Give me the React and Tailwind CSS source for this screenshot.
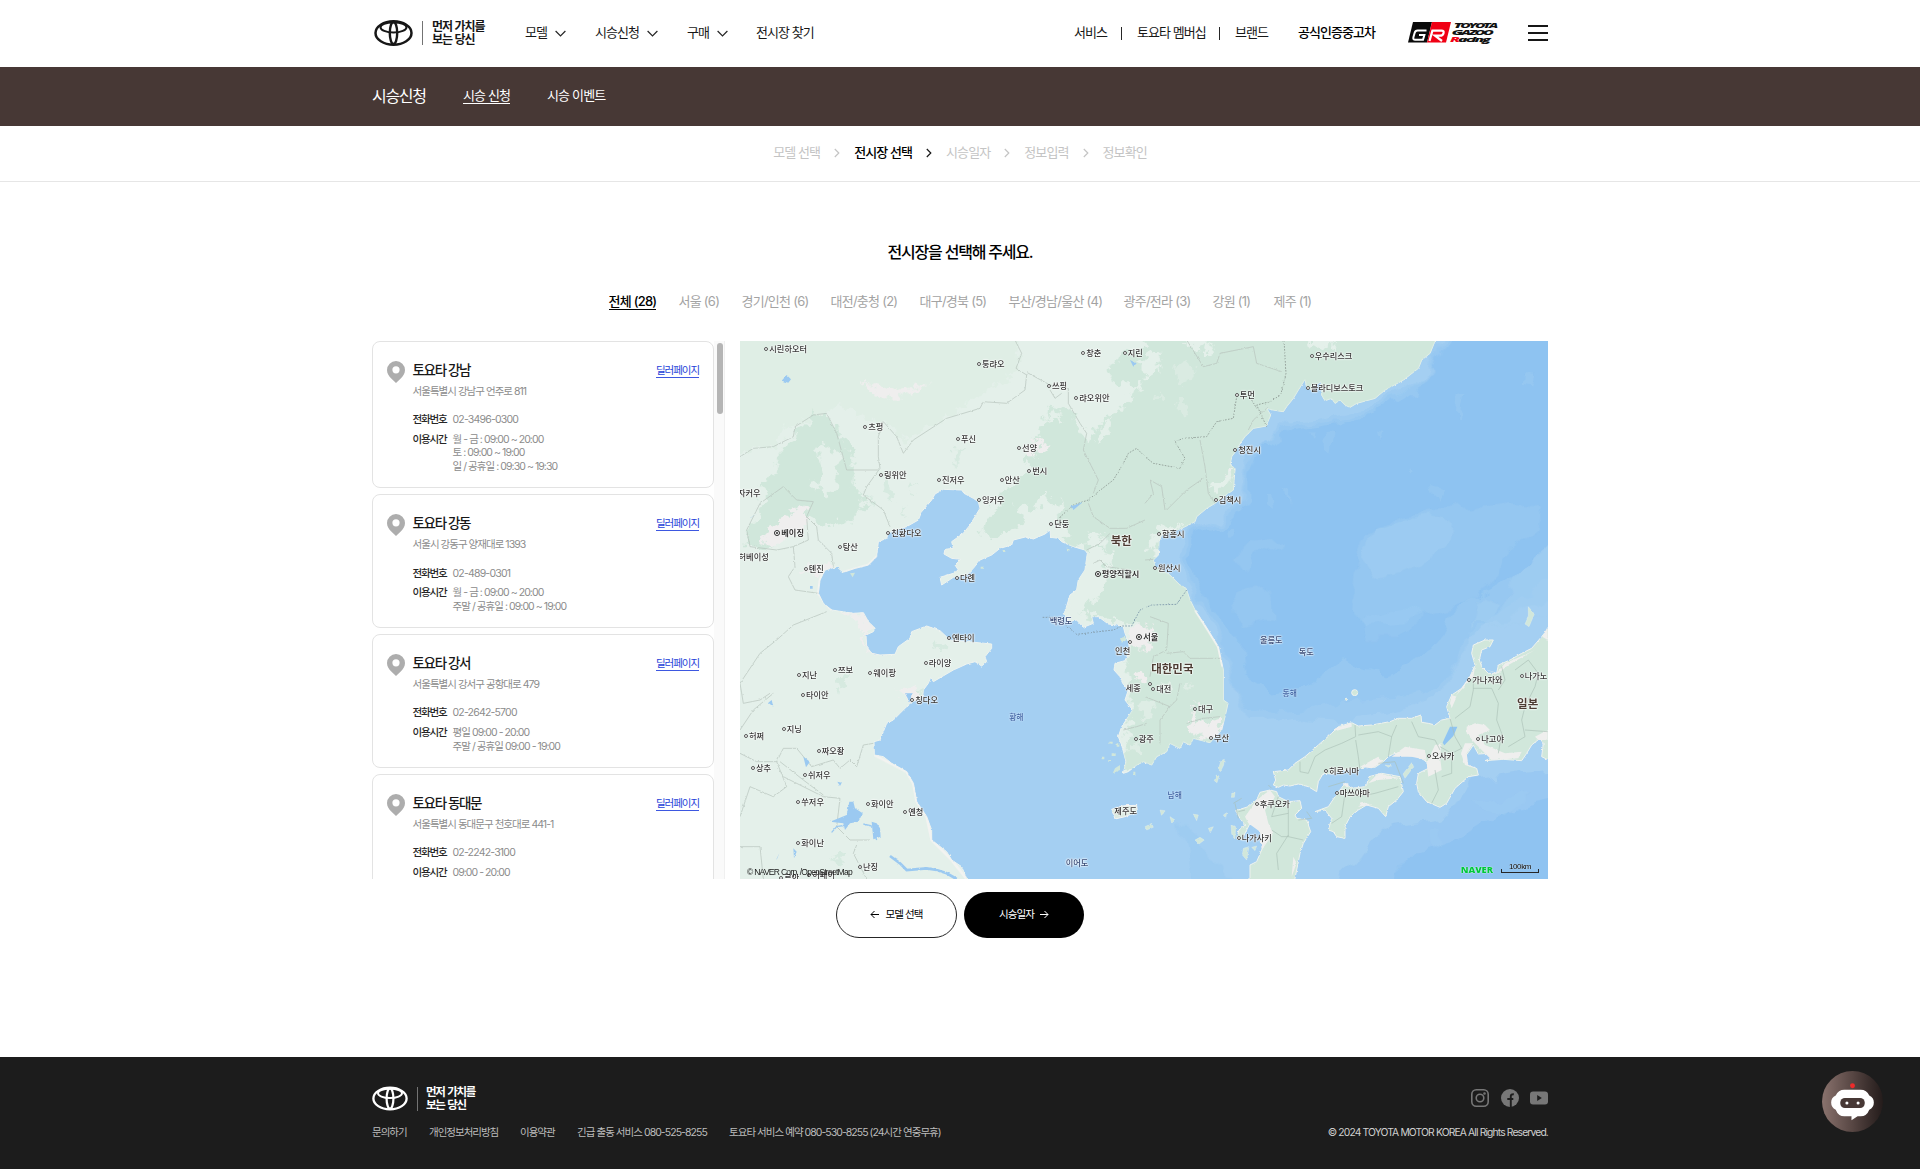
import React from "react";

const Chevron = ({ className, d, w, h }) => (
  <svg className={className} width={w} height={h} viewBox={`0 0 ${w} ${h}`} fill="none" stroke="currentColor" strokeWidth="1.2">
    <path d={d} />
  </svg>
);
const Down = () => <Chevron className="text-neutral-800" w={11} h={7} d="M.6 1 5.5 6 10.400 1" />;
const Next = ({ active }) => (
  <Chevron className={active ? "text-neutral-900" : "text-[#c4c4c4]"} w={6} h={10} d="M.8 1 4.8 5 .8 9" />
);

const Emblem = ({ w, h }) => (
  <svg width={w} height={h} viewBox="0 0 78 52" fill="none" stroke="currentColor">
    <ellipse cx="39" cy="26" rx="36" ry="23.4" strokeWidth="5" />
    <path d="M39 5C54 5 65 9 65 14.500S54 25 39 25 13 20 13 14.500 24 5 39 5z" strokeWidth="4.200" />
    <ellipse cx="39" cy="26" rx="7.400" ry="22" strokeWidth="4.800" />
  </svg>
);

const Brand = ({ w, h, bar, gap1, gap2, text }) => (
  <div className="flex items-center">
    <Emblem w={w} h={h} />
    <span className={`w-px ${gap1} ${gap2} ${bar}`} />
    <span className={`font-bold whitespace-nowrap [word-spacing:1px] ${text}`}>
      먼저 가치를
      <br />
      보는 당신
    </span>
  </div>
);

const Racing = () => (
  <svg width="90" height="24" viewBox="0 0 90 24">
    <path d="M5 1H24L19 21.500H0z" fill="#0a0a0a" />
    <path d="M24 1H43L38 21.500H19z" fill="#f00014" />
    <path d="M18.5 9.600H9.5Q7.3 9.600 6.600 12L5.400 16.200Q4.800 18.800 7.200 18.800H15L16.400 14H11" fill="none" stroke="#fff" strokeWidth="2" />
    <path d="M21.500 20 24.400 9.600H33.500Q36.300 9.600 35.500 12.200 34.900 14.700 32 14.700H27L34 20" fill="none" stroke="#fff" strokeWidth="2.200" />
    <g fontFamily="Open Sans, Liberation Sans, sans-serif" fontWeight="800" fontStyle="italic" fill="#111">
      <text x="45.500" y="6.600" fontSize="7.200" textLength="42.500" lengthAdjust="spacingAndGlyphs">T<tspan fontSize="6.200">OYOTA</tspan></text>
      <text x="43.500" y="13.600" fontSize="7.200" textLength="40" lengthAdjust="spacingAndGlyphs">G<tspan fontSize="6.200">AZOO</tspan></text>
      <text x="42" y="21" fontSize="7.600" textLength="39" lengthAdjust="spacingAndGlyphs">
        <tspan fill="#f00014">R</tspan>acing
      </text>
    </g>
  </svg>
);

const Header = () => (
  <header className="h-[67px] bg-white">
    <div className="mx-auto flex h-[66px] w-[1176px] items-center justify-between text-[13px] tracking-[-0.95px] whitespace-nowrap">
      <div className="flex items-center">
        <div className="ml-0.5 w-[151px]">
          <Brand w={39} h={26} gap1="ml-[9px] h-6" gap2="mr-[9px]" bar="bg-neutral-500" text="text-[12px] leading-[13px] tracking-[-1.100px]" />
        </div>
        <a className="flex w-[70px] items-center gap-2">모델<Down /></a>
        <a className="flex w-[92px] items-center gap-2">시승신청<Down /></a>
        <a className="flex w-[69px] items-center gap-2">구매<Down /></a>
        <a>전시장 찾기</a>
      </div>
      <div className="flex items-center">
        <a className="w-[47px]">서비스</a>
        <span className="mr-[15px] h-[13px] w-px bg-neutral-800" />
        <a className="w-[82px]">토요타 멤버십</a>
        <span className="mr-[15px] h-[13px] w-px bg-neutral-800" />
        <a className="w-[63px]">브랜드</a>
        <a className="w-[110px] font-medium text-black">공식인증중고차</a>
        <Racing />
        <div className="ml-[30px] flex w-5 flex-col gap-[5px]">
          <i className="h-0.5 bg-neutral-900" />
          <i className="h-0.5 bg-neutral-900" />
          <i className="h-0.5 bg-neutral-900" />
        </div>
      </div>
    </div>
  </header>
);

const SubNav = () => (
  <nav className="h-[59px] bg-[#473835] text-white">
    <div className="mx-auto flex h-[57px] w-[1176px] items-center text-[13px] tracking-[-0.9px] whitespace-nowrap">
      <h2 className="w-[91px] text-[16px] tracking-[-1.3px]">시승신청</h2>
      <a className="w-[47px] border-b border-white leading-[16px]">시승 신청</a>
      <a className="ml-[37px] tracking-[-0.850px]">시승 이벤트</a>
    </div>
  </nav>
);

const steps = ["모델 선택", "전시장 선택", "시승일자", "정보입력", "정보확인"];
const Steps = () => (
  <ol className="flex h-14 items-center justify-center border-b border-[#e6e6e6] pb-px text-[13px] tracking-[-0.9px] whitespace-nowrap">
    {steps.map((s, i) => (
      <li key={s} className="flex items-center">
        <span className={i === 1 ? "font-medium text-black" : "text-[#c4c4c4]"}>{s}</span>
        {i < 4 && (
          <span className="mr-[14px] ml-[14px]">
            <Next active={i === 1} />
          </span>
        )}
      </li>
    ))}
  </ol>
);

const regions = [
  ["전체 (28)", "w-[70px]"],
  ["서울 (6)", "w-[63px]"],
  ["경기/인천 (6)", "w-[89px]"],
  ["대전/충청 (2)", "w-[89px]"],
  ["대구/경북 (5)", "w-[89px]"],
  ["부산/경남/울산 (4)", "w-[115px]"],
  ["광주/전라 (3)", "w-[89px]"],
  ["강원 (1)", "w-[61px]"],
  ["제주 (1)", "w-[38px]"],
];

const Tabs = () => (
  <ul className="mt-[28px] flex h-5 justify-center text-[13px] tracking-[-0.75px] whitespace-nowrap text-[#a3a3a3]">
    {regions.map(([name, w], i) => (
      <li key={name} className={w}>
        <span className={i === 0 ? "inline-block border-b border-black leading-[16px] font-medium text-black" : "inline-block leading-[16px]"}>{name}</span>
      </li>
    ))}
  </ul>
);

const dealers = [
  { name: "토요타 강남", addr: "서울특별시 강남구 언주로 811", tel: "02-3496-0300", hours: ["월 - 금 : 09:00 ~ 20:00", "토 : 09:00 ~ 19:00", "일 / 공휴일 : 09:30 ~ 19:30"] },
  { name: "토요타 강동", addr: "서울시 강동구 양재대로 1393", tel: "02-489-0301", hours: ["월 - 금 : 09:00 ~ 20:00", "주말 / 공휴일 : 09:00 ~ 19:00"] },
  { name: "토요타 강서", addr: "서울특별시 강서구 공항대로 479", tel: "02-2642-5700", hours: ["평일 09:00 - 20:00", "주말 / 공휴일 09:00 - 19:00"] },
  { name: "토요타 동대문", addr: "서울특별시 동대문구 천호대로 441-1", tel: "02-2242-3100", hours: ["09:00 - 20:00", "주말 / 공휴일 09:00 - 19:00"] },
];

const DealerCard = ({ d }) => (
  <li className="flex shrink-0 rounded-lg border border-[#e3e3e3] bg-white px-[14px] pt-[18.500px] pb-[14px]">
    <svg className="mr-[7.500px] shrink-0" width="18" height="22" viewBox="0 0 18 22">
      <path fill="#adadad" fillRule="evenodd" d="M9 0a9 9 0 0 0-9 9c0 3.500 1.800 6 4 8.200L9 22l5-4.800c2.200-2.200 4-4.700 4-8.200a9 9 0 0 0-9-9zm0 5.200a3.600 3.600 0 1 1 0 7.200 3.600 3.600 0 0 1 0-7.200z" />
    </svg>
    <div className="grow text-[10.5px] leading-[13.6px] tracking-[-0.97px] whitespace-nowrap text-[#8c8c8c]">
      <div className="flex h-5 items-center justify-between">
        <h3 className="text-[13.500px] font-medium tracking-[-1.350px] text-neutral-900">{d.name}</h3>
        <a className="mt-px border-b border-[#3d57e0] leading-[12px] tracking-[-1.050px] text-[#2340d8]">딜러페이지</a>
      </div>
      <p className="mt-[4.500px]">{d.addr}</p>
      <dl className="mt-[14.500px] grid grid-cols-[40px_1fr] gap-y-[6px]">
        <dt className="font-medium text-neutral-800 tracking-[-1.200px]">전화번호</dt>
        <dd className="tracking-[-0.8px]">{d.tel}</dd>
        <dt className="font-medium text-neutral-800 tracking-[-1.200px]">이용시간</dt>
        <dd className="tracking-[-0.94px]">
          {d.hours.map((h) => (
            <p key={h}>{h}</p>
          ))}
        </dd>
      </dl>
    </div>
  </li>
);

const DealerList = () => (
  <div className="flex h-[538px] w-[353px] overflow-hidden">
    <ul className="flex w-[342px] flex-col gap-[6px]">
      {dealers.map((d) => (
        <DealerCard key={d.name} d={d} />
      ))}
    </ul>
    <div className="w-[11px] border-r border-[#f0f0f0] bg-[#fafafa] pt-0.5 pl-[2.500px]">
      <div className="h-[71px] w-[6px] rounded-full bg-[#b5b5b5]" />
    </div>
  </div>
);

/* Map labels: [text, marker x, marker y] in map units, three units per pixel. */
const cities = [
  ["시린하오터", 79, 27], ["퉁랴오", 717, 73], ["창춘", 1030, 38], ["지린", 1154, 40], ["쓰핑", 927, 137], ["랴오위안", 1009, 174],
  ["츠펑", 376, 261], ["푸신", 654, 298], ["선양", 837, 325], ["번시", 868, 392], ["링위안", 423, 404], ["진저우", 597, 420],
  ["안산", 785, 420], ["잉커우", 717, 480], ["단둥", 934, 552], ["친황다오", 445, 580], ["탕산", 299, 621], ["톈진", 197, 686],
  ["다롄", 651, 714], ["우수리스크", 1715, 47], ["블라디보스토크", 1703, 143], ["투먼", 1490, 165], ["청진시", 1486, 329],
  ["김책시", 1427, 481], ["함흥시", 1257, 582], ["원산시", 1245, 683], ["옌타이", 627, 895], ["라이양", 557, 968], ["쯔보", 285, 990],
  ["웨이팡", 391, 999], ["지난", 177, 1005], ["타이안", 189, 1066], ["칭다오", 517, 1080], ["지닝", 131, 1166], ["허쩌", 18, 1188],
  ["짜오좡", 236, 1232], ["상추", 39, 1285], ["쉬저우", 195, 1306], ["쑤저우", 175, 1386], ["화이안", 384, 1392], ["옌청", 496, 1416],
  ["화이난", 175, 1509], ["난징", 360, 1580], ["루안", 124, 1614], ["허페이", 208, 1604], ["광주", 1187, 1196], ["대전", 1240, 1047],
  ["대구", 1365, 1108], ["부산", 1413, 1194], ["가나자와", 2188, 1020], ["나가노", 2345, 1008], ["나고야", 2215, 1198],
  ["오사카", 2066, 1248], ["히로시마", 1758, 1293], ["마쓰야마", 1790, 1360], ["후쿠오카", 1550, 1391], ["나가사키", 1496, 1494],
];
const capitals = [["베이징", 112, 580], ["평양직할시", 1073, 701], ["서울", 1198, 891]];
const countries = [["북한", 1144, 602], ["대한민국", 1297, 987], ["일본", 2363, 1092]];
const places = [["자커우", 28, 460], ["허베이성", 41, 650], ["인천", 1148, 933], ["세종", 1180, 1045], ["제주도", 1157, 1413]];
const seas = [["백령도", 963, 842], ["이어도", 1011, 1568], ["울릉도", 1594, 901], ["독도", 1699, 935]];
const waters = [["황해", 829, 1130], ["동해", 1649, 1059], ["남해", 1304, 1365]];

const at = (x, y) => ({ left: x / 3, top: (y - 3) / 3 });
const halo = "[text-shadow:0_0_1px_#fff,0_0_1px_#fff,0_0_2px_#fff,0_0_2px_#fff]";
const softHalo = "[text-shadow:0_0_1px_#dcebfb,0_0_2px_#dcebfb]";

const Place = ({ p, cls, glow = halo }) => (
  <span className={`absolute -translate-x-1/2 -translate-y-1/2 ${glow} ${cls}`} style={at(p[1], p[2])}>{p[0]}</span>
);

const MapLabels = () => (
  <div className="text-[8.200px] leading-[10px] font-medium tracking-normal whitespace-nowrap text-[#333]">
    {cities.map((c) => (
      <span key={c[0]} className={`absolute -ml-[2px] flex -translate-y-1/2 items-center gap-px ${halo}`} style={at(c[1], c[2])}>
        <i className="size-[4px] rounded-full border border-neutral-600 bg-white" />
        {c[0]}
      </span>
    ))}
    {capitals.map((c) => (
      <span key={c[0]} className={`absolute -ml-[3px] flex -translate-y-1/2 items-center gap-px font-bold ${halo}`} style={at(c[1], c[2])}>
        <i className="flex size-[6px] items-center justify-center rounded-full border border-neutral-800 bg-white">
          <b className="size-[2px] rounded-full bg-neutral-800" />
        </i>
        {c[0]}
      </span>
    ))}
    {countries.map((p) => <Place key={p[0]} p={p} cls="text-[11.5px] font-bold text-[#4c3c33]" />)}
    {places.map((p) => <Place key={p[0]} p={p} cls="" />)}
    {seas.map((p) => <Place key={p[0]} p={p} cls="text-[#354a78]" />)}
    {waters.map((p) => <Place key={p[0]} p={p} glow={softHalo} cls="text-[7.800px] text-[#3f62a3]" />)}
  </div>
);

const MAINLAND =
  "M-20-20H2085L2085 3 2070 40 2045 60 2035 85 1990 120 1935 150 1905 175 1850 190 1830 202 1815 195 1800 180 1785 190 1775 175 1755 182 1745 165 1744 125 1725 135 1715 150 1700 140 1695 118 1675 150 1660 175 1640 200 1630 215 1600 210 1580 205 1592 225 1578 258 1540 265 1515 290 1500 310 1490 330 1475 350 1470 375 1485 385 1480 450 1450 470 1425 490 1400 505 1370 530 1365 545 1325 565 1265 585 1257 605 1255 645 1240 660 1245 680 1290 705 1320 735 1338 745 1350 780 1365 810 1395 855 1435 920 1450 990 1450 1080 1464 1090 1455 1130 1445 1170 1425 1190 1410 1208 1380 1200 1360 1195 1350 1215 1330 1205 1320 1225 1290 1210 1280 1235 1250 1250 1235 1275 1210 1265 1190 1275 1165 1295 1150 1300 1158 1265 1145 1215 1135 1190 1145 1160 1165 1130 1178 1110 1155 1080 1165 1050 1148 1030 1140 1010 1122 990 1125 970 1155 962 1170 930 1165 905 1155 880 1150 860 1130 855 1105 852 1075 830 1055 830 1060 850 1030 862 1010 840 985 845 970 820 978 805 990 765 1010 750 1015 720 1035 690 1042 640 1035 630 1000 620 965 605 955 595 932 592 930 570 915 582 880 597 860 590 820 600 815 615 780 625 755 645 720 660 700 685 680 705 640 712 605 735 600 712 640 700 655 690 645 675 662 658 635 655 612 642 615 628 640 625 635 605 670 580 690 555 705 530 720 505 715 485 700 475 672 460 665 450 610 448 585 462 575 480 545 515 535 540 500 560 465 570 445 580 440 595 415 605 410 650 385 675 345 685 310 697 290 680 255 690 240 720 235 760 250 790 275 810 340 820 370 818 385 845 405 865 400 875 378 885 380 920 395 940 420 945 465 943 475 920 510 895 515 875 560 858 600 872 630 900 755 912 755 925 735 950 740 965 725 978 705 965 680 972 640 990 580 1025 572 1012 565 1030 550 1050 548 1070 510 1090 500 1100 480 1120 460 1140 440 1150 420 1200 402 1205 403 1245 430 1250 455 1270 500 1295 520 1330 530 1385 560 1430 575 1470 575 1500 620 1535 635 1560 665 1580 690 1640-20 1640z";

const HONSHU =
  "M385 485 392 510 385 525 400 532 415 525 435 528 460 522 490 530 515 545 520 515 535 490 560 492 590 480 640 475 665 470 690 472 715 455 730 440 750 430 790 437 820 440 845 455 850 475 820 490 815 520 820 545 845 575 885 592 905 580 930 535 970 500 1000 495 995 475 965 465 960 440 975 420 985 405 1000 432 1035 430 1045 442 1020 452 1075 448 1130 452 1145 430 1160 405 1185 385 1195 400 1190 440 1230 460V30L1190 80 1160 115 1130 130 1095 150 1060 165 1055 190 1030 190 1010 170 1003 150 1010 120 1035 110 1045 90 1020 90 985 105 980 130 990 165 975 200 950 235 920 255 905 290 915 325 890 330 870 345 850 340 830 337 828 315 800 325 760 325 735 335 680 345 640 348 620 338 580 350 560 370 520 405 480 440 450 460 430 480z";
const KYUSHU =
  "M395 545 400 560 430 575 465 572 470 595 450 615 455 625 485 630 497 665 475 700 465 730 455 780 445 830H315V765L335 755 350 720 362 690 345 665 335 640 315 640 305 660 290 690 275 685 282 660 300 645 285 625 272 602 310 590 335 570 345 547 375 540z";
const SHIKOKU =
  "M665 525 672 500 710 490 765 500 775 545 755 570 730 590 722 620 700 595 665 585 640 600 615 620 600 650 600 685 575 680 565 665 550 660 560 625 540 600 510 605 550 590 570 560 600 520 620 535 660 530z";
const ISLANDS =
  "M228 452 238 448 236 465 226 485 220 478zM214 495 222 498 216 518 208 512zM800 458 806 470 780 505 774 492zM1150-10 1168 12 1152 50 1140 42 1150 20zM260 550 270 548 268 562 260 562zM150 690 165 682 178 690 162 702zM190 655 205 650 196 668zM235 615 245 608 242 625zM258 645 272 650 270 685 260 672zM295 715 312 710 305 750 292 735zM320 712 335 708 330 722zM720 465 738 467 730 472zM0 650 20 640 25 652 5 660zM75 620 90 630 80 640zM145 612 160 615 155 632zM45 600 60 602 50 618z";

const TheMap = () => (
  <div className="relative h-[538px] w-[808px] overflow-hidden bg-[#a4cff2]">
    <svg className="block" width="808" height="538" viewBox="0 3 2424 1614">
      <defs>
        <filter id="coast" x="-5%" y="-5%" width="110%" height="110%">
          <feTurbulence type="fractalNoise" baseFrequency="0.1" numOctaves="3" seed="4" result="n" />
          <feDisplacementMap in="SourceGraphic" in2="n" scale="7" xChannelSelector="R" yChannelSelector="G" />
        </filter>
        <filter id="rough" x="-10%" y="-10%" width="120%" height="120%">
          <feTurbulence type="fractalNoise" baseFrequency="0.035" numOctaves="4" seed="9" result="n" />
          <feDisplacementMap in="SourceGraphic" in2="n" scale="60" xChannelSelector="R" yChannelSelector="G" />
        </filter>
        <filter id="depth" x="-10%" y="-10%" width="120%" height="120%">
          <feTurbulence type="fractalNoise" baseFrequency="0.012" numOctaves="3" seed="3" result="n" />
          <feDisplacementMap in="SourceGraphic" in2="n" scale="70" xChannelSelector="R" yChannelSelector="G" />
          <feGaussianBlur stdDeviation="1.500" />
        </filter>
        <clipPath id="land"><path d={MAINLAND} /></clipPath>
      </defs>

      <g filter="url(#depth)" fill="#8dc2f1">
        <path opacity=".28" d="M2110-30 2060 90 1990 150 1900 200 1750 235 1640 245 1590 290 1520 340 1500 480 1440 530 1330 590 1300 640 1350 740 1380 790 1440 900 1475 1000 1500 1110 1540 1150 1700 1130 1800 1140 1980 1110 2060 1080 2120 1040 2180 930 2190 860 2300 840 2460 740V-30z" />
        <path opacity=".35" d="M2125-30 2075 80 2005 150 1915 210 1775 245 1650 258 1575 300 1520 370 1510 480 1450 535 1350 590 1320 650 1365 740 1400 800 1460 910 1485 1030 1520 1120 1680 1110 1800 1085 1960 1070 2080 1050 2140 1000 2170 900 2260 830 2460 700V-30z" />
        <path opacity=".9" d="M2140-30 2095 60 2020 160 1930 215 1800 250 1660 270 1560 320 1525 400 1525 480 1470 540 1370 590 1340 650 1385 740 1420 800 1500 900 1510 1010 1590 1060 1700 1040 1800 960 1930 1000 2050 950 2110 880 2140 810 2230 760 2340 700 2460 600V-30z" />
        <path opacity=".5" d="M1800 1617 1880 1500 1960 1460 2100 1440 2200 1330 2300 1310 2460 1290V1660H1780z" />
        <path opacity=".8" d="M1960 1617 2020 1540 2150 1500 2260 1430 2460 1380V1660H1940z" />
        <path opacity=".25" d="M1330 1460 1420 1560 1500 1660H1360z" />
      </g>
      <g filter="url(#depth)" fill="#a4cff2">
        <path opacity=".35" d="M1850 670 1870 590 1920 545 1990 520 2080 510 2180 500 2300 490 2400 500 2390 570 2300 640 2270 720 2180 790 2080 820 1960 850 1870 860 1840 800z" />
        <path opacity=".5" d="M1900 560 1990 530 2080 520 2130 560 2120 610 2030 680 1960 710 1900 720 1870 670z" />
        <path opacity=".35" d="M1480 660 1530 615 1620 595 1610 625 1550 660 1510 700zM1480 760 1560 740 1600 760 1600 840 1500 860z" />
        <path opacity=".5" d="M2340 700 2440 620V820L2250 860 2290 800zM2200 790 2240 760 2290 780 2260 850 2190 850z" />
        <path opacity=".3" d="M1580 450 1600 450 1605 500 1580 490zM1700 280 1718 280 1712 310zM1750 280 1790 285 1780 350 1755 330zM1920 265 1940 270 1930 310zM2150 165 2170 160 2160 240 2145 230zM2350 90 2380 95 2370 130 2345 125zM2070 440 2100 450 2090 480zM1455 560 1485 560 1480 590 1460 590zM1640 430 1655 440 1650 500zM2010 370 2025 380 2015 395z" />
        <path opacity=".25" d="M1860 830 2000 800 2060 830 1980 900 1880 900z" />
        <path opacity=".25" d="M2060 1480 2100 1470 2110 1520 2070 1530zM2200 1400 2380 1350 2300 1430z" />
      </g>

      <g filter="url(#coast)">
        <path d={MAINLAND} fill="#e4f0ea" stroke="#eef3ef" strokeWidth="3" />
        <g transform="translate(1215 810)" fill="#d1e7db" stroke="#eef2ee" strokeWidth="3">
          <path d={HONSHU} />
          <path d={KYUSHU} />
          <path d={SHIKOKU} />
          <path d={ISLANDS} strokeWidth="1" />
          <circle cx="629" cy="248" r="9" />
          <circle cx="604" cy="268" r="3" />
        </g>
        <path d="M1115 1408 1150 1397 1190 1396 1192 1415 1155 1430 1125 1437z" fill="#dcebe2" stroke="#f3f3f3" strokeWidth="3" />
        <path fill="#d1e7db" d="M1085 1250h8v8h-8zM1108 1205h10v6h-10zM1130 1210h8v10h-8zM1115 1240h12v8h-12zM1125 1285 1140 1275 1140 1290 1118 1300zM1105 1260h8v6h-8zM1180 1295h6v10h-6zM1140 895 1155 890 1160 900 1145 908zM330 700 345 698 338 712zM722 680h10v6h-10zM788 630h8v6h-8zM980 622 990 630 982 636z" />
      </g>

      <g clipPath="url(#land)">
        <g filter="url(#rough)">
          <path fill="#ddeee4" d="M-40-40H820L840 90 700 180 620 230 500 300 440 250 300 200 160 250 100 320-40 350z" opacity=".8" />
          <g fill="#d0e7db">
            <path d="M120 340 165 290 220 225 250 215 290 260 310 300 340 330 345 400 340 440 380 500 340 540 240 560 200 520 120 600 60 630 20 620 20 570 60 540 60 490 90 470 60 440 110 400z" />
            <path d="M905 260 930 200 1000 215 1040 300 1090 240 1180 170 1215 130 1200-60H2180V260H1720L1640 330 1540 400 1530 480 1420 570 1320 640 1320 680 1420 760 1510 900 1540 1200 1420 1250 1320 1270 1220 1300 1150 1290 1175 1120 1160 960 1190 850 1080 830 1010 820 1060 700 1060 640 960 590 930 520 850 500 780 510 790 450 860 400 860 350z" />
            <path d="M730 560 760 510 830 500 850 540 800 590 720 580zM1100 90 1160 30 1220 20 1220 130 1120 130z" />
            <path d="M430 440 450 430 470 470 450 480zM500 430 530 440 510 460zM640 340 665 320 655 380zM380 470 400 480 390 500zM480 500 500 500 490 520z" opacity=".7" />
            <path d="M275 1050 300 1010 330 1000 310 1040zM580 900 620 920 600 940zM510 1055 560 1050 540 1065zM270 1560 320 1530 310 1570z" opacity=".7" />
          </g>
          <g fill="#e4f0ea">
            <path d="M230 330 270 310 300 350 290 440 250 470 220 440 245 400zM1240 30 1265 60 1250 100 1215 120 1200 60z" />
            <path d="M1300 70 1340 60 1370 90 1340 130 1310 120zM1310 180 1350 190 1340 230 1310 220zM1240 160 1270 170 1250 190z" opacity=".5" />
            <path d="M1030 620 1110 630 1130 680 1080 690 1100 740 1030 820 980 830 1000 750zM1230 580 1280 560 1330 550 1260 600 1255 645 1230 640zM1420 440 1470 390 1482 400 1470 430 1430 470zM1690 0 1730 30 1780 20 1760 0zM1340 0 1400 0 1420 30 1370 40z" />
            <path d="M890 470 920 460 945 500 970 480 960 540 990 580 950 590 900 540zM1045 580 1090 590 1100 620 1050 620zM1080 270 1120 230 1100 290 1070 310zM920 230 950 210 970 240z" />
            <path d="M1200 1090 1230 1080 1240 1120 1210 1150zM1270 1020 1290 1030 1280 1050zM1330 1040 1350 1030 1345 1060zM1170 1230 1200 1210 1200 1250z" opacity=".7" />
          </g>
          <g fill="#efeeee">
            <path d="M370 130 430 140 470 150 570 130 520 160 420 180 400 155z" />
            <path d="M60 600 100 560 180 500 210 530 200 560 140 590 120 620zM190 680 260 670 285 690 245 720zM870 310 920 310 900 340 860 340z" />
            <path d="M290 812 380 815 410 865 380 880 375 920 440 945 400 945 365 915 370 870 340 835z" />
            <path d="M480 1050 530 1040 540 1080 500 1090z" />
            <path d="M1160 880 1195 850 1235 865 1245 910 1220 930 1190 925 1165 915zM1345 1130 1350 1110 1365 1120 1360 1150 1400 1150 1440 1130 1450 1150 1440 1190 1370 1195 1350 1170zM1360 1090 1390 1085 1380 1100z" />
            <path d="M1180 1000 1200 985 1215 1010 1190 1030zM1460 400 1482 385 1480 410z" />
          </g>
        </g>
        <path d="M1366 810 1395 855 1435 920 1448 980M403 1245 500 1295 520 1330 530 1385 560 1430 575 1500 635 1560 680 1617M255 690 240 720 235 760 275 810M310 697 385 675 410 650" fill="none" stroke="#f3f3f1" strokeWidth="8" />
      </g>

      <g transform="translate(1215 810)">
        <g fill="#efefee" filter="url(#coast)">
          <path d="M965 350 990 340 1020 345 1035 360 1000 375 1020 405 1080 430 1130 425 1120 445 1040 450 990 400 965 370zM960 400 985 400 965 430 970 465 990 475 960 465 948 430zM870 405 890 400 885 440 890 480 850 500 845 460z" />
          <path d="M740 440 780 410 840 420 845 450 800 440zM645 470 700 440 715 455 680 475zM570 355 620 340 620 350 575 362zM335 570 375 540 390 560 360 600 370 640 385 670 350 720 345 665 310 640 300 620zM670 520 700 490 765 505 700 510zM1010 175 1055 190 1080 160 1150 130 1170 120 1090 165 1060 190zM975 200 990 170 985 200 930 260zM920 255 935 260 920 295 915 280zM1192 80 1208 50 1208 90zM650 575 680 585 640 590z" />
          <path d="M1170 380 1208 360V390L1180 390zM445 740 455 760 440 800zM590 520 610 520 610 535z" />
        </g>
        <path d="M915 350 937 350 925 378 898 406 893 398 902 378z" fill="#8fc4f2" />
        <path fill="none" stroke="#a7bdb3" strokeWidth="1.800" d="M630 345 632 380 590 400 540 420 510 440 490 490 465 485 465 455M632 390 640 440 645 480M640 375 700 365 740 380 755 345M740 380 730 440M800 335 820 380 870 390 885 420M915 325 930 380 950 415 920 430 885 410M985 235 1040 235 1060 280 1055 330 1070 370 1060 430M1070 170 1080 210 1060 240M1110 180 1150 150 1180 190 1170 230 1140 290 1130 330 1140 380 1090 410M1140 360 1208 365M985 200 985 240 975 290 930 325M870 480 880 540 860 580M920 430 920 490 890 500M330 580 370 590M400 560 380 620 430 610M430 570 430 680 475 690M380 660 410 680 430 680M430 675 395 730 400 780M600 540 640 560 690 550 760 530M600 550 590 620 560 640M265 580 290 565M280 605 300 600M270 580 280 625M460 630 500 625M485 605 500 625M370 525 380 535M550 530 600 515M700 460 750 455 775 520" />
      </g>

      <g fill="none" stroke="#b9c5bf" strokeWidth="2.200" filter="url(#coast)">
        <path d="M825 0 845 40 828 85 860 105 855 150 800 190 730 185 720 205 620 235 520 300 490 340 470 290 430 245 415 290 415 350 420 385 380 440 370 465 430 510 450 560M0 350 40 325 100 320 160 290 165 260 220 225 260 220 290 280 320 390 415 390M60 490 130 440 170 480 220 485 200 530 230 560 235 600 275 640 280 680M60 490 20 570 30 620 110 630 160 620 165 680 145 710 165 750 235 760M200 530 205 600 160 620" />
        <path d="M862 98 930 135 985 145 985 190 1020 250 1040 280 1030 330 1075 420 1060 460M930 150 945 175 965 160M1045 490 1060 530 1110 565 1160 565 1215 540M1040 630 1080 610 1110 580M1060 670 1080 660 1100 680 1170 690M1380 300 1395 380 1405 460 1425 490M1280 510 1340 450 1390 415M1215 490 1240 460 1230 420 1265 440 1275 510M1215 660 1240 658" />
        <path d="M1340 0 1390 80 1430 70 1440 40 1540 20 1550 70 1625 95M1580 205 1540 240 1525 270M1280 940 1330 935 1350 955 1445 955M1230 830 1285 850 1280 930 1240 950 1230 1010M1215 1070 1290 1100 1310 1080 1320 1030M1260 1210 1260 1140 1290 1100M1340 1150 1390 1135 1440 1130M1150 1170 1190 1160 1220 1150" />
        <path d="M260 815 160 855 110 900 60 940 0 1030 10 1090 60 1080 90 1060M0 1240 50 1265 110 1265 130 1225 170 1225 215 1280 280 1260 300 1285 330 1260 350 1280 370 1215 400 1210M110 1265 140 1340 100 1370 30 1340 0 1430M130 1310 250 1370 300 1375 290 1460 330 1500 390 1500M0 1520 60 1520 70 1617M350 1515 340 1540 380 1617M120 1265 190 1320 250 1365M0 1170 40 1110 100 1060" />
      </g>
      <g fill="none" stroke="#97a59e" strokeWidth="3" strokeDasharray="5 4" filter="url(#coast)">
        <path d="M945 545 1000 495 1045 480 1075 455 1120 420 1150 370 1165 340 1190 325 1215 350 1240 370 1320 385 1335 355 1305 305 1330 295 1400 290 1430 245 1480 235 1490 170M1632 0 1638 100 1622 165 1590 185 1550 195 1580 260M1535 180 1550 205" />
        <path d="M908 832 950 832 1010 883 1120 870 1145 858 1175 858 1200 810 1235 795 1310 793 1340 750" stroke="#86a0b0" />
      </g>
      <g fill="#9bc9f1" filter="url(#coast)">
        <path d="M125 122 140 105 153 118 145 128zM190 1250 210 1265 198 1282zM85 1088 95 1080 100 1100zM292 1325 305 1328 300 1338zM328 1385 340 1385 345 1405 368 1420 355 1445 330 1450 315 1470 310 1450 270 1445 320 1425zM395 1445 410 1450 420 1465 422 1490 400 1498zM495 1060 515 1060 510 1088zM990 500 1030 485 1000 510zM30 535 50 520 35 532zM210 738h8v8h-8zM1170 60 1190 70 1180 80zM108 1560 118 1540 112 1555zM160 1525 170 1535 162 1555z" />
        <path d="M450 1548 480 1570 500 1590 560 1585 590 1590 620 1600 650 1617" fill="none" stroke="#9bc9f1" strokeWidth="8" />
        <path d="M275 1477 290 1460 320 1455M370 1452 395 1458M410 1500 400 1470" fill="none" stroke="#9bc9f1" strokeWidth="4" />
      </g>
    </svg>
    <MapLabels />
    <i className="absolute top-[299px] left-[388px] size-[4px] rounded-full border border-neutral-600 bg-white" />
    <i className="absolute top-[341px] left-[408px] size-[4px] rounded-full border border-neutral-600 bg-white" />
    <span className="absolute bottom-[1px] left-[7px] font-[Liberation_Sans] text-[8.500px] leading-3 tracking-[-0.720px] whitespace-nowrap text-neutral-900">© NAVER Corp. /OpenStreetMap</span>
    <span className="absolute right-[55px] bottom-[3px] font-[Open_Sans] text-[9.300px] leading-3 font-extrabold text-[#00c73c] [text-shadow:0_0_1px_#fff,0_0_1px_#fff]">NAVER</span>
    <span className="absolute right-[9px] bottom-[6px] h-[10px] w-[38px] text-center font-[Liberation_Sans] text-[8px] leading-[7px] tracking-[-0.4px] text-black [text-shadow:0_0_1px_#fff]">
      100km
      <i className="absolute inset-x-0 bottom-0 h-1 border-x border-b border-neutral-800" />
    </span>
  </div>
);

const Arrow = ({ flip }) => (
  <svg className={flip ? "rotate-180" : ""} width="9" height="9" viewBox="0 0 9 9" fill="none" stroke="currentColor">
    <path d="M0 4.500h8M4.500 1 8 4.500 4.500 8" />
  </svg>
);

const Footer = () => (
  <footer className="flex h-[112px] justify-between bg-[#1c1c1c] px-[372px] text-[10.500px] tracking-[-1px] whitespace-nowrap text-[#bdbdbd]">
    <div className="pt-[29px] text-white">
      <Brand w={36} h={25} gap1="ml-[9px] h-6" gap2="mr-[8px]" bar="bg-neutral-500" text="text-[11.500px] leading-[12.500px] tracking-[-1.250px]" />
      <div className="mt-[14px] flex text-[#bdbdbd]">
        <a className="w-[57px]">문의하기</a>
        <a className="w-[91px]">개인정보처리방침</a>
        <a className="w-[57px]">이용약관</a>
        <a className="w-[152px] tracking-[-0.950px]">긴급 출동 서비스 080-525-8255</a>
        <a className="tracking-[-0.960px]">토요타 서비스 예약 080-530-8255 (24시간 연중무휴)</a>
      </div>
    </div>
    <div className="flex flex-col items-end pt-8">
      <div className="flex items-center gap-[11.500px] text-[#777]">
        <svg width="18" height="18" viewBox="0 0 18 18" fill="none" stroke="currentColor" strokeWidth="1.600">
          <rect x=".8" y=".8" width="16.400" height="16.400" rx="4.500" />
          <circle cx="9" cy="9" r="3.800" />
          <circle cx="13.500" cy="4.500" r=".5" fill="currentColor" />
        </svg>
        <svg width="18" height="18" viewBox="0 0 18 18">
          <circle cx="9" cy="9" r="9" fill="currentColor" />
          <path d="M9.800 18V7.200Q9.800 5 12.800 5.200M6.300 10H12.300" fill="none" stroke="#1c1c1c" strokeWidth="1.900" />
        </svg>
        <svg width="18" height="14" viewBox="0 0 18 14">
          <rect width="18" height="13" y=".5" rx="3" fill="currentColor" />
          <path d="M7.200 4v6l4.600-3z" fill="#1c1c1c" />
        </svg>
      </div>
      <p className="mt-[18px] text-[10.300px] tracking-[-0.850px] text-[#d0d0d0]">© 2024 TOYOTA MOTOR KOREA All Rights Reserved.</p>
    </div>
  </footer>
);

const ChatBot = () => (
  <button className="fixed right-[37px] bottom-[37px] size-[61px] rounded-full bg-gradient-to-r from-[#8a736e] via-[#574643] to-[#241c1b]">
    <svg width="61" height="61" viewBox="0 0 60 60">
      <circle cx="30" cy="14.500" r="2.400" fill="#ee2b2b" />
      <path fill="#fff" d="M22 18.500H38Q44 18.500 46.500 24 51 26 51 31 51 36 46.500 38 44 44.500 38 44.500H35L29 48.500V44.500H22Q16 44.500 13.500 38 9 36 9 31 9 26 13.500 24 16 18.500 22 18.500z" />
      <rect x="18" y="26.500" width="24" height="10" rx="4.500" fill="#473835" />
      <circle cx="24.500" cy="31.500" r="1.500" fill="#fff" />
      <circle cx="35.500" cy="31.500" r="1.500" fill="#fff" />
    </svg>
  </button>
);

export default function App() {
  return (
    <div className="flex h-[1169px] w-full flex-col overflow-hidden bg-white font-[Inter,'Noto_Sans_CJK_KR',sans-serif] text-neutral-900">
      <Header />
      <SubNav />
      <Steps />
      <main className="grow">
        <h1 className="mt-[58px] text-center text-[16px] leading-6 font-medium tracking-[-1.200px] text-black">전시장을 선택해 주세요.</h1>
        <Tabs />
        <div className="mx-auto mt-[29px] flex w-[1176px] justify-between">
          <DealerList />
          <TheMap />
        </div>
        <div className="mt-[12.500px] flex justify-center gap-[7px] text-[10.500px] tracking-[-0.900px]">
          <button className="flex h-[46px] w-[121px] items-center justify-center gap-1.5 rounded-full border border-neutral-800 bg-white text-black"><Arrow flip />모델 선택</button>
          <button className="flex h-[46px] w-[120px] items-center justify-center gap-1.5 rounded-full bg-black text-white">시승일자<Arrow /></button>
        </div>
      </main>
      <Footer />
      <ChatBot />
    </div>
  );
}
